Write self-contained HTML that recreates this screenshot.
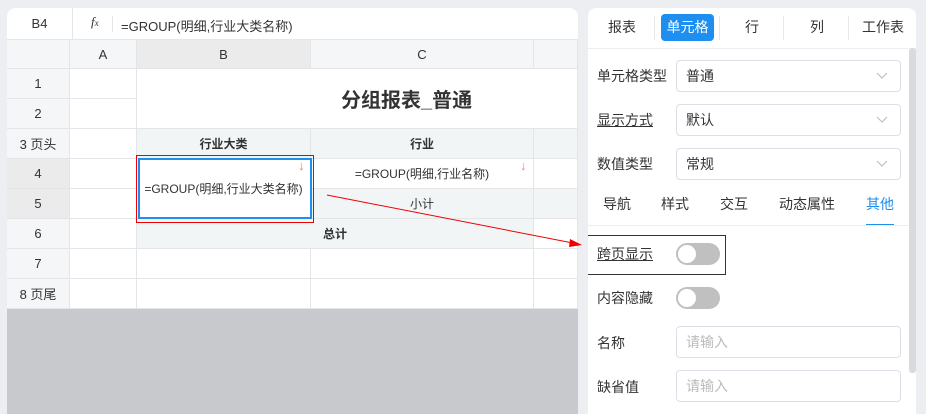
<!DOCTYPE html>
<html><head><meta charset="utf-8"><style>
*{box-sizing:border-box;margin:0;padding:0}
body{width:926px;height:414px;overflow:hidden;background:#eceef1;font-family:"Liberation Sans","Noto Sans CJK SC",sans-serif;font-size:13px;color:#333;position:relative}
.abs{position:absolute}
#left{left:7px;top:8px;width:571px;height:406px;background:#c8c9cc;border-radius:8px 8px 0 0;overflow:hidden}
#fb{left:0;top:0;width:571px;height:32px;background:#fff;border-bottom:1px solid #e4e6ea}
.c{position:absolute;display:flex;align-items:center;justify-content:center;border-right:1px solid #e3e5e8;border-bottom:1px solid #e3e5e8;background:#fff}
.h{background:#f5f6f7}
.hs{background:#ebebec}
.t{background:#f2f5f6}
#right{left:588px;top:8px;width:328px;height:406px;background:#fff;border-radius:8px 8px 0 0;overflow:hidden}
.tab{position:absolute;top:6px;height:27px;line-height:27px;text-align:center;font-size:14px;color:#333}
.sep{position:absolute;top:8px;width:1px;height:24px;background:#e6e8eb}
.lbl{position:absolute;left:9px;font-size:14px;color:#333}
.sel{position:absolute;left:88px;width:225px;height:32px;border:1px solid #dcdfe6;border-radius:4px;font-size:14px;padding-left:9px;line-height:30px}
.sel svg{position:absolute;right:12px;top:11px}
.ph{color:#bbb}
.sw{position:absolute;left:88px;width:44px;height:22px;border-radius:11px;background:#c0c0c0}
.sw::after{content:"";position:absolute;left:2px;top:2px;width:18px;height:18px;border-radius:50%;background:#fff}
.st{position:absolute;top:186px;font-size:14px;color:#333}
</style></head><body>
<div id="left" class="abs">
 <div id="fb" class="abs">
  <div class="abs" style="left:0;top:0;width:66px;height:32px;border-right:1px solid #e4e6ea;text-align:center;line-height:32px;font-size:13px">B4</div>
  <div class="abs" style="left:84px;top:6px;font-style:italic;font-family:'Liberation Serif',serif;font-size:13px">f<span style="font-size:9px">x</span></div>
  <div class="abs" style="left:105px;top:8px;width:1px;height:16px;background:#e4e6ea"></div>
  <div class="abs" style="left:114px;top:8px;font-size:13px">=GROUP(明细,行业大类名称)</div>
 </div>
 <div class="c h" style="left:0;top:32px;width:63px;height:29px"></div>
 <div class="c h" style="left:63px;top:32px;width:67px;height:29px">A</div>
 <div class="c hs" style="left:130px;top:32px;width:174px;height:29px">B</div>
 <div class="c h" style="left:304px;top:32px;width:223px;height:29px">C</div>
 <div class="c h" style="left:527px;top:32px;width:44px;height:29px"></div>
 <div class="c h" style="left:0;top:61px;width:63px;height:30px">1</div>
 <div class="c h" style="left:0;top:91px;width:63px;height:30px">2</div>
 <div class="c h" style="left:0;top:121px;width:63px;height:30px">3 页头</div>
 <div class="c hs" style="left:0;top:151px;width:63px;height:30px">4</div>
 <div class="c hs" style="left:0;top:181px;width:63px;height:30px">5</div>
 <div class="c h" style="left:0;top:211px;width:63px;height:30px">6</div>
 <div class="c h" style="left:0;top:241px;width:63px;height:30px">7</div>
 <div class="c h" style="left:0;top:271px;width:63px;height:30px">8 页尾</div>
 <div class="c" style="left:63px;top:61px;width:67px;height:30px"></div>
 <div class="c" style="left:63px;top:91px;width:67px;height:30px"></div>
 <div class="c" style="left:63px;top:121px;width:67px;height:30px"></div>
 <div class="c" style="left:63px;top:151px;width:67px;height:30px"></div>
 <div class="c" style="left:63px;top:181px;width:67px;height:30px"></div>
 <div class="c" style="left:63px;top:211px;width:67px;height:30px"></div>
 <div class="c" style="left:63px;top:241px;width:67px;height:30px"></div>
 <div class="c" style="left:63px;top:271px;width:67px;height:30px"></div>
 <div class="c" style="left:130px;top:61px;width:441px;height:60px;font-size:20px;font-weight:bold;color:#333"><span style="position:absolute;left:204px">分组报表_普通</span></div>
 <div class="c t" style="left:130px;top:121px;width:174px;height:30px;font-weight:bold;font-size:12px">行业大类</div>
 <div class="c t" style="left:304px;top:121px;width:223px;height:30px;font-weight:bold;font-size:12px">行业</div>
 <div class="c" style="left:527px;top:121px;width:44px;height:30px;background:#f2f5f6"></div>
 <div class="c" style="left:130px;top:151px;width:174px;height:60px;font-size:12px">=GROUP(明细,行业大类名称)</div>
 <div class="c" style="left:304px;top:151px;width:223px;height:30px;font-size:12px">=GROUP(明细,行业名称)</div>
 <div class="c" style="left:527px;top:151px;width:44px;height:30px"></div>
 <div class="c t" style="left:304px;top:181px;width:223px;height:30px;font-size:12px">小计</div>
 <div class="c t" style="left:527px;top:181px;width:44px;height:30px"></div>
 <div class="c t" style="left:130px;top:211px;width:397px;height:30px;font-weight:bold;font-size:12px">总计</div>
 <div class="c" style="left:527px;top:211px;width:44px;height:30px"></div>
 <div class="c" style="left:130px;top:241px;width:174px;height:30px"></div>
 <div class="c" style="left:304px;top:241px;width:223px;height:30px"></div>
 <div class="c" style="left:527px;top:241px;width:44px;height:30px"></div>
 <div class="c" style="left:130px;top:271px;width:174px;height:30px"></div>
 <div class="c" style="left:304px;top:271px;width:223px;height:30px"></div>
 <div class="c" style="left:527px;top:271px;width:44px;height:30px"></div>
</div>
<div class="abs" style="left:136px;top:155px;width:178px;height:68px;border:1px solid #e00"></div>
<div class="abs" style="left:138px;top:158px;width:174px;height:61px;border:2px solid #1e8ff0"></div>
<div class="abs" style="left:298px;top:158px;color:#f07a5a;font-size:13px">↓</div>
<div class="abs" style="left:520px;top:158px;color:#f07aa0;font-size:13px">↓</div>
<svg class="abs" style="left:0;top:0" width="926" height="414"><line x1="327" y1="195" x2="578" y2="244" stroke="#e00" stroke-width="1"/><polygon points="582,245 570,239 569,247" fill="#e00"/></svg>
<div id="right" class="abs">
 <div class="tab" style="left:10px;width:48px">报表</div>
 <div class="sep" style="left:66px"></div>
 <div class="tab" style="left:73px;width:53px;background:#1e8ff0;color:#fff;border-radius:4px;top:6px">单元格</div>
 <div class="sep" style="left:131px"></div>
 <div class="tab" style="left:140px;width:48px">行</div>
 <div class="sep" style="left:195px"></div>
 <div class="tab" style="left:205px;width:48px">列</div>
 <div class="sep" style="left:260px"></div>
 <div class="tab" style="left:268px;width:54px">工作表</div>
 <div class="abs" style="left:0;top:40px;width:328px;height:1px;background:#eceef1"></div>
 <div class="abs" style="left:321px;top:40px;width:7px;height:325px;background:#d8dadd;border-radius:3px"></div>
 <div class="lbl" style="top:58px">单元格类型</div>
 <div class="sel" style="top:52px">普通<svg width="12" height="8"><path d="M1 1l5 5 5-5" stroke="#bbb" fill="none"/></svg></div>
 <div class="lbl" style="top:102px;text-decoration:underline">显示方式</div>
 <div class="sel" style="top:96px">默认<svg width="12" height="8"><path d="M1 1l5 5 5-5" stroke="#bbb" fill="none"/></svg></div>
 <div class="lbl" style="top:146px">数值类型</div>
 <div class="sel" style="top:140px">常规<svg width="12" height="8"><path d="M1 1l5 5 5-5" stroke="#bbb" fill="none"/></svg></div>
 <div class="st" style="left:15px">导航</div>
 <div class="st" style="left:73px">样式</div>
 <div class="st" style="left:132px">交互</div>
 <div class="st" style="left:191px">动态属性</div>
 <div class="st" style="left:278px;color:#1e8ff0">其他</div>
 <div class="abs" style="left:278px;top:216px;width:28px;height:2px;background:#1e8ff0"></div>
 <div class="abs" style="left:0;top:217px;width:321px;height:1px;background:#eceef1"></div>
 <div class="abs" style="left:-1px;top:227px;width:139px;height:40px;border:1px solid #333"></div>
 <div class="lbl" style="top:236px;text-decoration:underline">跨页显示</div>
 <div class="sw" style="top:235px"></div>
 <div class="lbl" style="top:280px">内容隐藏</div>
 <div class="sw" style="top:279px"></div>
 <div class="lbl" style="top:325px">名称</div>
 <div class="sel ph" style="top:318px">请输入</div>
 <div class="lbl" style="top:369px">缺省值</div>
 <div class="sel ph" style="top:362px">请输入</div>
</div>
</body></html>
